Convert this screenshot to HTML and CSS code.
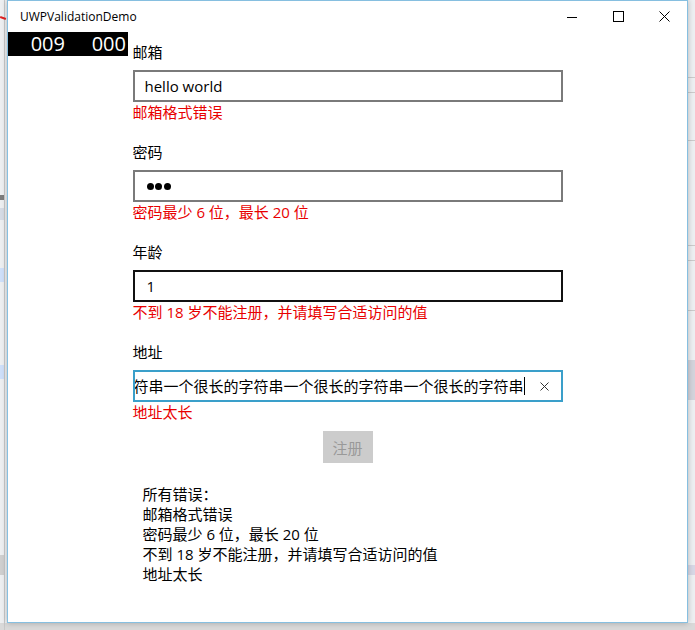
FILE: index.html
```html
<!DOCTYPE html>
<html lang="zh-CN">
<head>
<meta charset="utf-8">
<title>UWPValidationDemo</title>
<link rel="stylesheet" href="styles.css">
</head>
<body>
<span class="arrow"></span>
<div class="window">
  <div class="titlebar">
    <span class="title">UWPValidationDemo</span>
    <div class="caption">
      <span class="cbtn"><svg width="10" height="10" viewBox="0 0 10 10"><path d="M0 5.5H10" stroke="#000" stroke-width="1"/></svg></span>
      <span class="cbtn"><svg width="11" height="11" viewBox="0 0 11 11"><rect x="0.5" y="0.5" width="10" height="10" fill="none" stroke="#000" stroke-width="1"/></svg></span>
      <span class="cbtn"><svg width="11" height="11" viewBox="0 0 11 11"><path d="M0.5 0.5L10.5 10.5M10.5 0.5L0.5 10.5" stroke="#000" stroke-width="1"/></svg></span>
    </div>
  </div>
  <div class="fps"><span class="fps-a">009</span><span class="fps-b">000</span></div>
  <main class="form">
    <div class="field">
      <div class="label">邮箱</div>
      <div class="box"><span class="value">hello world</span></div>
      <div class="error">邮箱格式错误</div>
    </div>
    <div class="field">
      <div class="label">密码</div>
      <div class="box"><span class="dots"><i></i><i></i><i></i></span></div>
      <div class="error">密码最少 6 位，最长 20 位</div>
    </div>
    <div class="field">
      <div class="label">年龄</div>
      <div class="box box-hover"><span class="value value-age">1</span></div>
      <div class="error">不到 18 岁不能注册，并请填写合适访问的值</div>
    </div>
    <div class="field">
      <div class="label">地址</div>
      <div class="box box-focus">
        <div class="scroll"><span class="long">一个很长的字符串一个很长的字符串一个很长的字符串一个很长的字符串一个很长的字符串</span></div>
        <span class="clear"><svg width="9" height="9" viewBox="0 0 9 9"><path d="M0.5 0.5L8.5 8.5M8.5 0.5L0.5 8.5" stroke="#333" stroke-width="1"/></svg></span>
      </div>
      <div class="error">地址太长</div>
    </div>
    <div class="actions"><button class="btn" disabled>注册</button></div>
    <div class="summary">
      <div>所有错误：</div>
      <div>邮箱格式错误</div>
      <div>密码最少 6 位，最长 20 位</div>
      <div>不到 18 岁不能注册，并请填写合适访问的值</div>
      <div>地址太长</div>
    </div>
  </main>
</div>
</body>
</html>
```

FILE: styles.css
```css
* { box-sizing: border-box; }

html, body {
  margin: 0;
  padding: 0;
}

body {
  width: 695px;
  height: 630px;
  overflow: hidden;
  position: relative;
  font-family: "Open Sans", "Noto Sans CJK SC", sans-serif;
  background:
    linear-gradient(#c8c8c8, #c8c8c8) 4px 0 / 1px 630px no-repeat,
    linear-gradient(#7d7d7d, #7d7d7d) 0 195px / 5px 5px no-repeat,
    linear-gradient(#d6dce6, #d6dce6) 0 208px / 5px 12px no-repeat,
    linear-gradient(#cfe0fa, #cfe0fa) 0 268px / 5px 14px no-repeat,
    linear-gradient(#cfe0fa, #cfe0fa) 0 365px / 5px 14px no-repeat,
    linear-gradient(#d0d0d0, #d0d0d0) 0 555px / 5px 20px no-repeat,
    linear-gradient(#cccccc, #cccccc) 688px 77px / 7px 1px no-repeat,
    linear-gradient(#cccccc, #cccccc) 688px 92px / 7px 1px no-repeat,
    linear-gradient(#cccccc, #cccccc) 688px 140px / 7px 1px no-repeat,
    linear-gradient(#cccccc, #cccccc) 688px 245px / 7px 1px no-repeat,
    linear-gradient(#cccccc, #cccccc) 688px 260px / 7px 1px no-repeat,
    linear-gradient(#cccccc, #cccccc) 688px 310px / 7px 1px no-repeat,
    linear-gradient(#d4d4dc, #d4d4dc) 688px 360px / 7px 40px no-repeat,
    linear-gradient(#d8d8e6, #d8d8e6) 688px 565px / 7px 10px no-repeat,
    linear-gradient(#d9d9d9, #d9d9d9) 0 623px / 695px 7px no-repeat,
    #eef0f2;
}

.arrow {
  position: absolute;
  left: 0;
  top: 17px;
  width: 6px;
  height: 2px;
  background: #e02020;
  transform: rotate(20deg);
}

.window {
  position: relative;
  margin-left: 7px;
  width: 681px;
  height: 623px;
  background: #fff;
  border: 1px solid #86bfe0;
  box-shadow: 0 0 6px rgba(0, 0, 0, 0.25);
}

.titlebar {
  height: 31px;
  display: flex;
  align-items: center;
  justify-content: space-between;
}

.title {
  padding-left: 12px;
  font-family: "Open Sans", sans-serif;
  font-size: 12px;
  color: #000;
}

.caption {
  display: flex;
  height: 31px;
}

.cbtn {
  width: 46px;
  height: 31px;
  display: flex;
  align-items: center;
  justify-content: center;
}

.cbtn svg { display: block; }

.fps {
  position: absolute;
  left: 0;
  top: 31px;
  width: 120px;
  height: 24px;
  background: #000;
  color: #fff;
  font-family: "Open Sans", sans-serif;
  font-size: 20px;
  line-height: 24px;
  display: flex;
}

.fps-a {
  width: 57px;
  text-align: right;
}

.fps-b {
  width: 61px;
  text-align: right;
}

.form {
  width: 430px;
  margin: 0 auto;
  padding-top: 10px;
  font-size: 15px;
  line-height: 20px;
  color: #000;
}

.field {
  margin-bottom: 20px;
}

.field:nth-child(4) {
  margin-bottom: 0;
}

.label {
  height: 20px;
}

.box {
  margin-top: 8px;
  height: 32px;
  border: 2px solid #7a7a7a;
  padding: 0 10px;
  display: flex;
  align-items: center;
  background: #fff;
}

.box-hover {
  border-color: #111;
}

.box-focus {
  border-color: #3a9fca;
  padding: 0;
}

.value {
  white-space: nowrap;
}

.value-age {
  padding-left: 2px;
}

.dots {
  display: flex;
  gap: 1.5px;
  padding-left: 2px;
}

.dots i {
  display: block;
  width: 7px;
  height: 7px;
  border-radius: 50%;
  background: #000;
}

.scroll {
  flex: 1;
  height: 100%;
  overflow: hidden;
  display: flex;
  align-items: center;
  justify-content: flex-end;
  padding-right: 6px;
}

.long {
  flex-shrink: 0;
  white-space: nowrap;
  border-right: 1px solid #000;
  line-height: 18px;
}

.clear {
  width: 30px;
  height: 100%;
  display: flex;
  align-items: center;
  justify-content: center;
  padding-right: 2px;
}

.clear svg { display: block; }

.error {
  color: #e80000;
  height: 20px;
}

.actions {
  display: flex;
  justify-content: center;
  margin-top: 9px;
}

.btn {
  width: 50px;
  height: 32px;
  border: none;
  background: #cccccc;
  color: #999999;
  font-family: "Open Sans", "Noto Sans CJK SC", sans-serif;
  font-size: 15px;
  padding: 0;
}

.summary {
  margin-top: 21px;
  padding-left: 10px;
}
```
